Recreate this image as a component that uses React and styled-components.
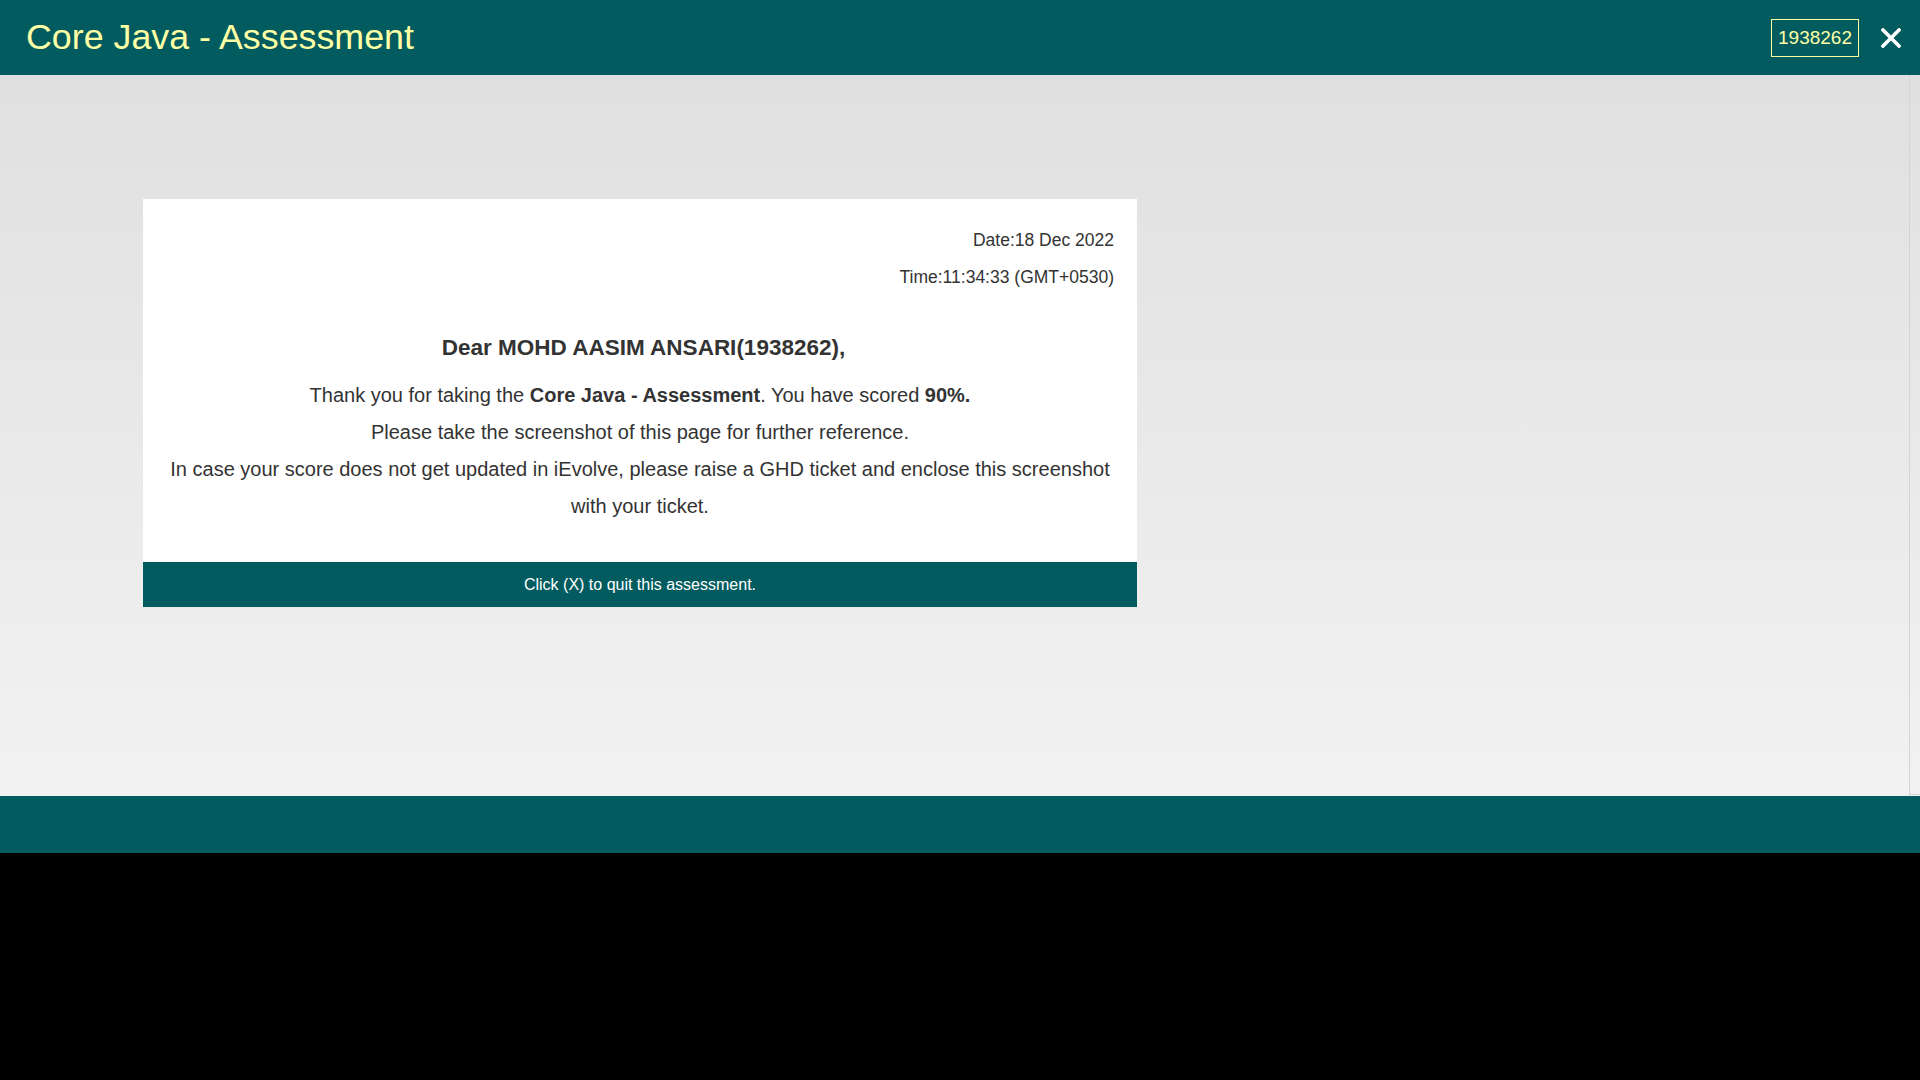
import React from "react";
import styled, { createGlobalStyle } from "styled-components";

const colors = {
  teal: "#025b5f",
  cream: "#ffffa6",
  text: "#333333",
};

const GlobalStyle = createGlobalStyle`
  html, body {
    margin: 0;
    padding: 0;
    background: #000;
    font-family: "Liberation Sans", Arial, sans-serif;
  }
`;

const Page = styled.div`
  width: 1920px;
  height: 1080px;
  display: flex;
  flex-direction: column;
  background: #000;
`;

const Header = styled.header`
  height: 75px;
  flex-shrink: 0;
  background: ${colors.teal};
  display: flex;
  align-items: center;
  justify-content: space-between;
  padding: 0 19px 0 26px;
`;

const Title = styled.h1`
  margin: 0;
  font-size: 35.8px;
  font-weight: normal;
  color: ${colors.cream};
`;

const HeaderRight = styled.div`
  display: flex;
  align-items: center;
  gap: 22px;
`;

const IdBadge = styled.div`
  width: 88px;
  height: 38px;
  box-sizing: border-box;
  border: 1px solid ${colors.cream};
  color: ${colors.cream};
  font-size: 19px;
  display: flex;
  align-items: center;
  justify-content: center;
`;

const CloseButton = styled.button`
  background: none;
  border: none;
  padding: 0;
  width: 20px;
  height: 20px;
  display: flex;
  align-items: center;
  justify-content: center;
  cursor: pointer;
`;

const Main = styled.main`
  height: 721px;
  flex-shrink: 0;
  display: flex;
  background: linear-gradient(to bottom, #e0e0e0, #f2f2f2);
`;

const Content = styled.div`
  flex: 1;
  padding: 124px 0 0 143px;
`;

const ScrollTrack = styled.div`
  width: 11px;
  box-sizing: border-box;
  border-left: 1px solid #d4d4d4;
  border-bottom: 1px solid #d4d4d4;
  height: 720px;
`;

const Card = styled.section`
  width: 994px;
  background: #fff;
  color: ${colors.text};
`;

const CardBody = styled.div`
  padding: 23px 23px 37px 23px;
`;

const Meta = styled.div`
  text-align: right;
  font-size: 17.5px;
  line-height: 37px;
`;

const Greeting = styled.h2`
  margin: 33px 0 11px;
  padding-left: 7px;
  text-align: center;
  font-size: 22.5px;
  line-height: 37px;
  font-weight: bold;
`;

const Message = styled.p`
  margin: 0;
  text-align: center;
  font-size: 20px;
  line-height: 37px;
`;

const CardFooter = styled.div`
  height: 45px;
  background: ${colors.teal};
  color: #fff;
  font-size: 16px;
  display: flex;
  align-items: center;
  justify-content: center;
`;

const Footer = styled.footer`
  height: 57px;
  flex-shrink: 0;
  background: ${colors.teal};
`;

const CloseIcon = () => (
  <svg width="20" height="20" viewBox="0 0 20 20">
    <path
      d="M2 2 L18 18 M18 2 L2 18"
      stroke="#fff"
      strokeWidth="3.6"
      strokeLinecap="square"
    />
  </svg>
);

export default function App() {
  return (
    <Page>
      <GlobalStyle />
      <Header>
        <Title>Core Java - Assessment</Title>
        <HeaderRight>
          <IdBadge>1938262</IdBadge>
          <CloseButton aria-label="close">
            <CloseIcon />
          </CloseButton>
        </HeaderRight>
      </Header>
      <Main>
        <Content>
          <Card>
            <CardBody>
              <Meta>Date:18 Dec 2022</Meta>
              <Meta>Time:11:34:33 (GMT+0530)</Meta>
              <Greeting>Dear MOHD AASIM ANSARI(1938262),</Greeting>
              <Message>
                Thank you for taking the <b>Core Java - Assessment</b>. You have
                scored <b>90%.</b>
              </Message>
              <Message>Please take the screenshot of this page for further reference.</Message>
              <Message>
                In case your score does not get updated in iEvolve, please raise a
                GHD ticket and enclose this screenshot with your ticket.
              </Message>
            </CardBody>
            <CardFooter>Click (X) to quit this assessment.</CardFooter>
          </Card>
        </Content>
        <ScrollTrack />
      </Main>
      <Footer />
    </Page>
  );
}
